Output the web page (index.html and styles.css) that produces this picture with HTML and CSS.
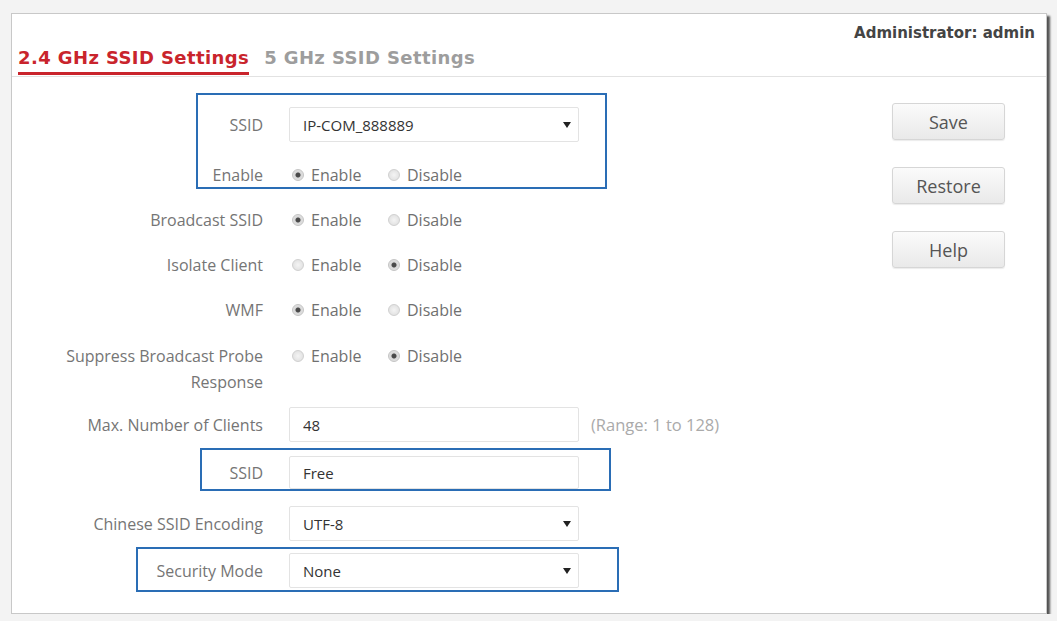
FILE: index.html
```html
<!DOCTYPE html>
<html lang="en">
<head>
    <meta charset="UTF-8">
    <meta name="viewport" content="width=device-width, initial-scale=1.0">
    <title>SSID Settings</title>
    <link rel="stylesheet" href="styles.css">
</head>
<body>
    <div class="window">
        <div class="header">
            <div class="admin">Administrator: admin</div>
            <div class="tabs">
                <span class="tab active">2.4 GHz SSID Settings</span>
                <span class="tab">5 GHz SSID Settings</span>
            </div>
        </div>

        <div class="content">
            <form class="settings">
                <div class="mark mark-a">
                    <div class="row row-field">
                        <label class="label">SSID</label>
                        <div class="select"><select><option>IP-COM_888889</option></select></div>
                    </div>
                    <div class="row row-radio row-last">
                        <label class="label">Enable</label>
                        <div class="options">
                            <label class="opt"><input type="radio" name="en" checked> Enable</label>
                            <label class="opt"><input type="radio" name="en"> Disable</label>
                        </div>
                    </div>
                </div>

                <div class="row row-radio first-plain">
                    <label class="label">Broadcast SSID</label>
                    <div class="options">
                        <label class="opt"><input type="radio" name="bc" checked> Enable</label>
                        <label class="opt"><input type="radio" name="bc"> Disable</label>
                    </div>
                </div>
                <div class="row row-radio">
                    <label class="label">Isolate Client</label>
                    <div class="options">
                        <label class="opt"><input type="radio" name="iso"> Enable</label>
                        <label class="opt"><input type="radio" name="iso" checked> Disable</label>
                    </div>
                </div>
                <div class="row row-radio">
                    <label class="label">WMF</label>
                    <div class="options">
                        <label class="opt"><input type="radio" name="wmf" checked> Enable</label>
                        <label class="opt"><input type="radio" name="wmf"> Disable</label>
                    </div>
                </div>
                <div class="row row-radio row-tall">
                    <label class="label">Suppress Broadcast Probe Response</label>
                    <div class="options">
                        <label class="opt"><input type="radio" name="sup"> Enable</label>
                        <label class="opt"><input type="radio" name="sup" checked> Disable</label>
                    </div>
                </div>

                <div class="row row-field row-max">
                    <label class="label">Max. Number of Clients</label>
                    <input class="text" type="text" value="48">
                    <span class="hint">(Range: 1 to 128)</span>
                </div>

                <div class="mark mark-b">
                    <div class="row row-field">
                        <label class="label">SSID</label>
                        <input class="text" type="text" value="Free">
                    </div>
                </div>

                <div class="row row-field row-enc">
                    <label class="label">Chinese SSID Encoding</label>
                    <div class="select"><select><option>UTF-8</option></select></div>
                </div>

                <div class="mark mark-c">
                    <div class="row row-field">
                        <label class="label">Security Mode</label>
                        <div class="select"><select><option>None</option></select></div>
                    </div>
                </div>
            </form>

            <div class="actions">
                <button type="button">Save</button>
                <button type="button">Restore</button>
                <button type="button">Help</button>
            </div>
        </div>
    </div>
</body>
</html>
```

FILE: styles.css
```css
body {
    margin: 13px 0 0 11px;
    background-color: #f3f3f3;
    font-family: "Open Sans", "Noto Sans", sans-serif;
    font-size: 16px;
    color: #707070;
}

.window {
    width: 1034px;
    height: 599px;
    background-color: white;
    border: 1px solid #c8c8c8;
    box-shadow: 3px 3px 2px rgba(0, 0, 0, 0.65), -1px -1px 3px rgba(0, 0, 0, 0.12);
}

/* header with tabs */
.header {
    height: 62px;
    border-bottom: 1px solid #e2e2e2;
    font-family: "DejaVu Sans", sans-serif;
    font-weight: bold;
}

.admin {
    text-align: right;
    padding: 9px 11px 0 0;
    line-height: 20px;
    font-size: 15px;
    color: #444;
}

.tabs {
    margin-top: 3px;
    padding-left: 6px;
    display: flex;
    gap: 15px;
}

.tab {
    font-size: 18px;
    line-height: 23px;
    letter-spacing: 0.4px;
    padding-bottom: 4px;
    color: #9d9d9d;
}

.tab.active {
    color: #c9242c;
    border-bottom: 3px solid #c9242c;
    padding-bottom: 3px;
}

/* main area */
.content {
    display: flex;
}

.settings {
    flex: 1;
    padding-top: 16px;
}

.row {
    display: flex;
    align-items: center;
}

.label {
    width: 251px;
    flex-shrink: 0;
    text-align: right;
    margin-right: 26px;
    color: #757575;
}

.row-radio {
    height: 24px;
    margin-top: 21px;
}

.row-tall {
    align-items: flex-start;
    height: 52px;
}

.row-tall .label {
    line-height: 26px;
    width: 206px;
    margin-left: 45px;
}

.row-tall .options {
    height: 26px;
}

.first-plain {
    margin-top: 19px;
}

.options {
    display: flex;
    align-items: center;
    padding-left: 3px;
}

.opt {
    display: flex;
    align-items: center;
    width: 96px;
    color: #707070;
}

input[type="radio"] {
    appearance: none;
    width: 12px;
    height: 12px;
    margin: 0 7px 0 0;
    border-radius: 50%;
    border: 1px solid #d0d0d0;
    background: radial-gradient(circle, #f4f4f4 0, #dcdcdc 100%);
}

input[type="radio"]:checked {
    background: radial-gradient(circle, #4a4a4a 0, #4a4a4a 2px, #d8d8d8 3px, #e8e8e8 100%);
    border-color: #c4c4c4;
}

.text,
.select select {
    width: 290px;
    height: 35px;
    box-sizing: border-box;
    border: 1px solid #e3e3e3;
    border-radius: 2px;
    padding: 0 13px;
    font-family: "Open Sans", "Noto Sans", sans-serif;
    font-size: 15px;
    color: #333;
    background-color: white;
}

.select {
    position: relative;
}

.select select {
    appearance: none;
    display: block;
}

.select::after {
    content: "";
    position: absolute;
    right: 8px;
    top: 15px;
    border-left: 4px solid transparent;
    border-right: 4px solid transparent;
    border-top: 6px solid #222;
}

.hint {
    margin-left: 12px;
    font-size: 16.5px;
    color: #aaa;
}

.row-max {
    margin-top: 12px;
}

.row-enc {
    margin-top: 15px;
}

/* blue annotation boxes */
.mark {
    border: 2px solid #2a6db5;
    box-sizing: border-box;
}

.mark-a {
    margin-left: 184px;
    width: 411px;
    height: 96px;
    padding-top: 12px;
}

.mark-a .label {
    width: 65px;
}

.mark-a .row-radio {
    margin-top: 21px;
}

.mark-b {
    margin: 6px 0 0 188px;
    width: 411px;
    height: 43px;
    padding-top: 6px;
}

.mark-b .label {
    width: 61px;
}

.mark-b .text {
    height: 33px;
}

.mark-c {
    margin: 6px 0 0 124px;
    width: 483px;
    height: 45px;
    padding-top: 4px;
}

.mark-c .label {
    width: 125px;
}

/* buttons */
.actions {
    display: flex;
    flex-direction: column;
    gap: 27px;
    padding-top: 26px;
    margin-right: 41px;
}

.actions button {
    width: 113px;
    height: 37px;
    border: 1px solid #d6d6d6;
    border-radius: 3px;
    background: linear-gradient(#fbfbfb, #e9e9e9);
    font-family: "Open Sans", "Noto Sans", sans-serif;
    font-size: 18px;
    color: #555;
    box-shadow: 0 1px 1px rgba(0, 0, 0, 0.08);
}
```
